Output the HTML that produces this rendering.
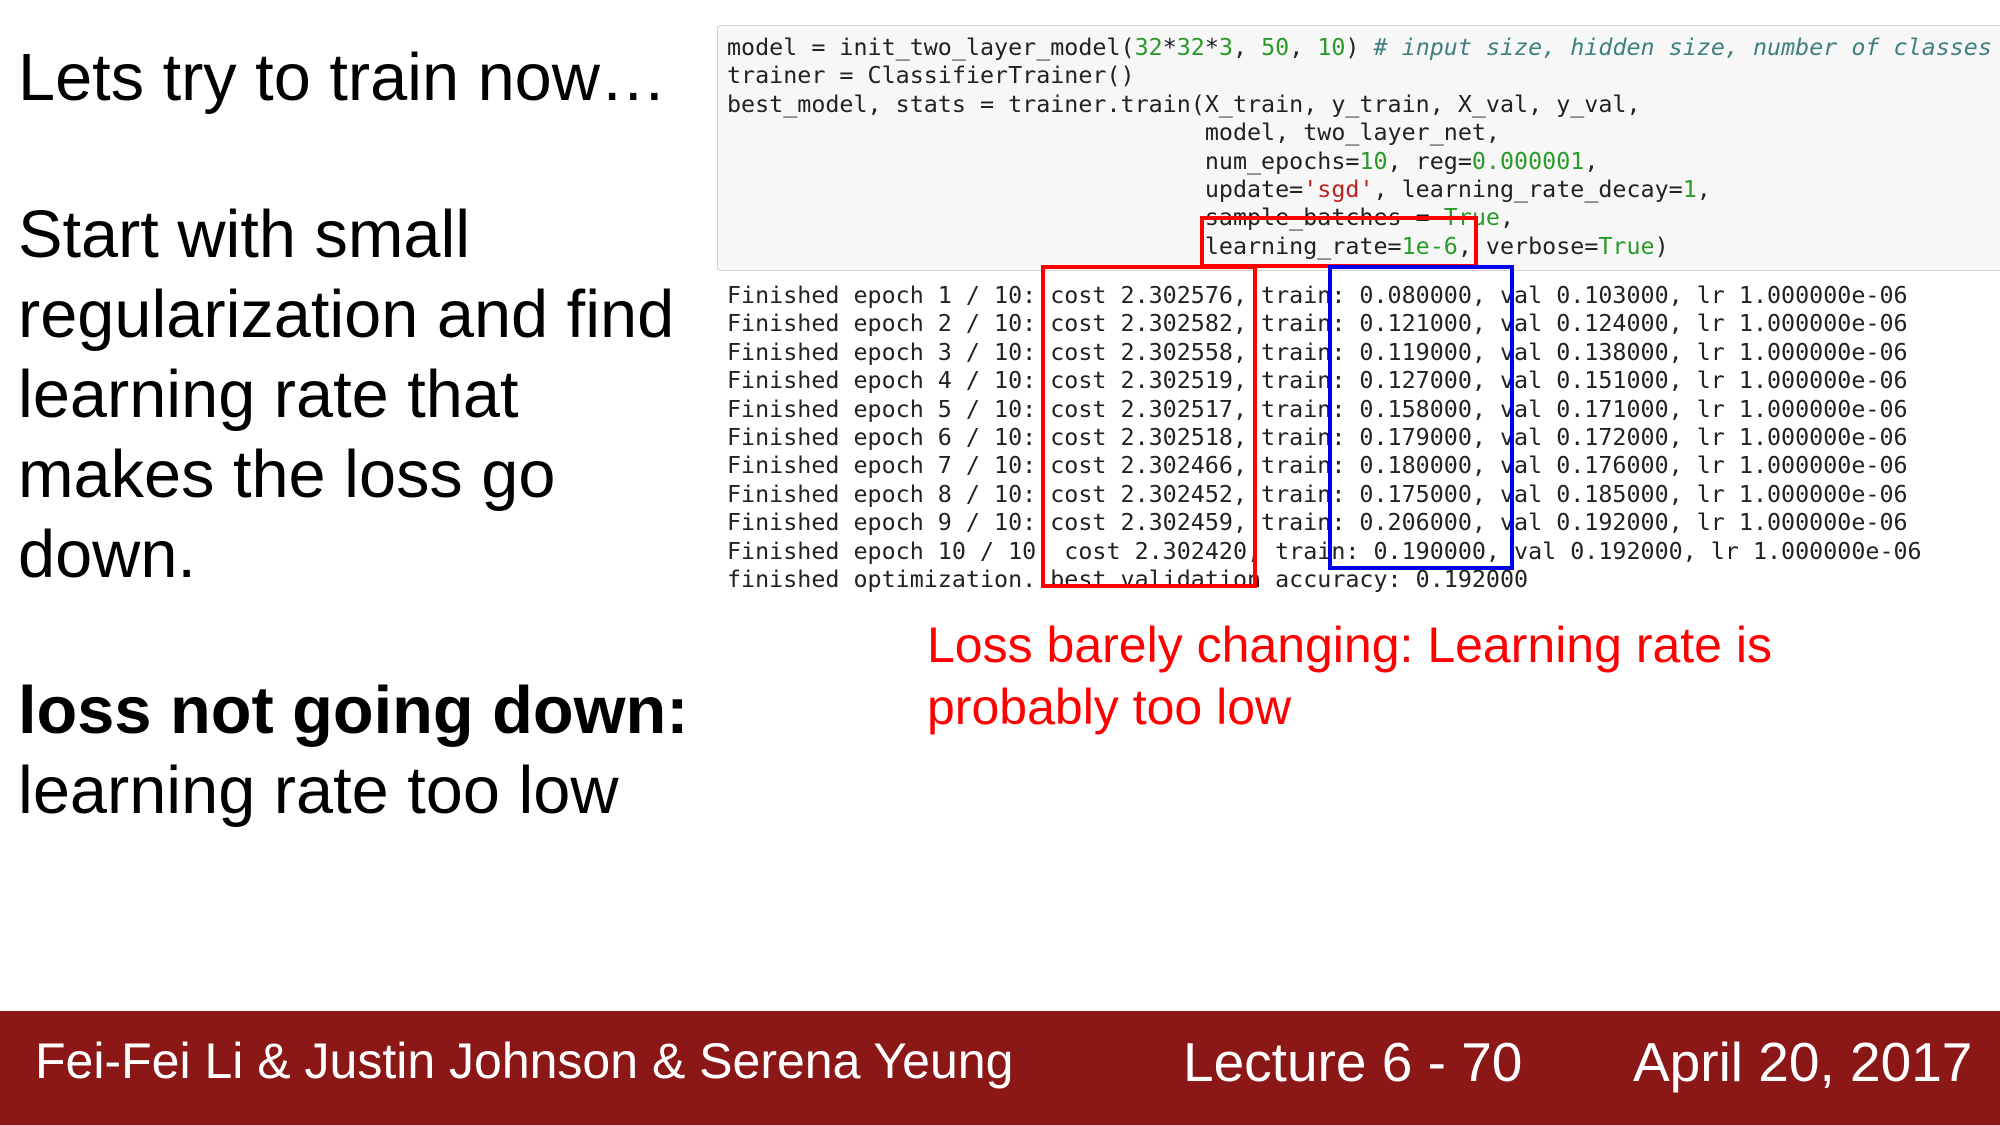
<!DOCTYPE html>
<html><head><meta charset="utf-8"><style>
body{margin:0;width:2000px;height:1125px;position:relative;background:#fff;overflow:hidden;font-family:"Liberation Sans",Arial,sans-serif;}
.t{position:absolute;left:18px;font-size:66.7px;line-height:80px;color:#000;white-space:nowrap;}
.code{position:absolute;left:717px;top:25px;width:1300px;height:244px;background:#f7f7f7;border:1px solid #d2d2d2;border-radius:3px;}
.m{position:absolute;left:727px;font-family:"DejaVu Sans Mono","Liberation Mono",monospace;font-size:23.35px;line-height:28.4px;color:#222;white-space:pre;}
.g{color:#2a9a2a}.c{color:#408080;font-style:italic}.s{color:#ba2121}
.box{position:absolute;border:4px solid #f00;box-sizing:border-box;}
.foot{position:absolute;left:0;top:1011px;width:2000px;height:114px;background:#8c1717;color:#fff;}
.foot div{position:absolute;white-space:nowrap;line-height:60px;}
.ann{position:absolute;left:927px;color:#f00;font-size:50px;line-height:62px;white-space:nowrap;}
</style></head><body>
<div class="t" style="top:38px">Lets try to train now…</div>
<div class="t" style="top:195px">Start with small<br>regularization and find<br>learning rate that<br>makes the loss go<br>down.</div>
<div class="t" style="top:671px"><b>loss not going down:</b><br>learning rate too low</div>

<div class="code"></div>
<div class="m" style="top:33px">model = init_two_layer_model(<span class="g">32</span>*<span class="g">32</span>*<span class="g">3</span>, <span class="g">50</span>, <span class="g">10</span>) <span class="c"># input size, hidden size, number of classes</span>
trainer = ClassifierTrainer()
best_model, stats = trainer.train(X_train, y_train, X_val, y_val,
                                  model, two_layer_net,
                                  num_epochs=<span class="g">10</span>, reg=<span class="g">0.000001</span>,
                                  update=<span class="s">'sgd'</span>, learning_rate_decay=<span class="g">1</span>,
                                  sample_batches = <span class="g">True</span>,
                                  learning_rate=<span class="g">1e-6</span>, verbose=<span class="g">True</span>)</div>
<div class="m" style="top:281px">Finished epoch 1 / 10: cost 2.302576, train: 0.080000, val 0.103000, lr 1.000000e-06
Finished epoch 2 / 10: cost 2.302582, train: 0.121000, val 0.124000, lr 1.000000e-06
Finished epoch 3 / 10: cost 2.302558, train: 0.119000, val 0.138000, lr 1.000000e-06
Finished epoch 4 / 10: cost 2.302519, train: 0.127000, val 0.151000, lr 1.000000e-06
Finished epoch 5 / 10: cost 2.302517, train: 0.158000, val 0.171000, lr 1.000000e-06
Finished epoch 6 / 10: cost 2.302518, train: 0.179000, val 0.172000, lr 1.000000e-06
Finished epoch 7 / 10: cost 2.302466, train: 0.180000, val 0.176000, lr 1.000000e-06
Finished epoch 8 / 10: cost 2.302452, train: 0.175000, val 0.185000, lr 1.000000e-06
Finished epoch 9 / 10: cost 2.302459, train: 0.206000, val 0.192000, lr 1.000000e-06
Finished epoch 10 / 10: cost 2.302420, train: 0.190000, val 0.192000, lr 1.000000e-06
finished optimization. best validation accuracy: 0.192000</div>

<div class="box" style="left:1200px;top:216px;width:278px;height:52px"></div>
<div class="box" style="left:1041px;top:265px;width:216px;height:323px"></div>
<div class="box" style="left:1328px;top:265px;width:186px;height:305px;border-color:#0000ee"></div>

<div class="ann" style="top:614px">Loss barely changing: Learning rate is<br>probably too low</div>

<div class="foot">
<div style="left:35px;top:20px;font-size:50px">Fei-Fei Li &amp; Justin Johnson &amp; Serena Yeung</div>
<div style="left:1183px;top:21px;font-size:55px">Lecture 6 - 70</div>
<div style="left:1633px;top:21px;font-size:55px">April 20, 2017</div>
</div>
</body></html>
